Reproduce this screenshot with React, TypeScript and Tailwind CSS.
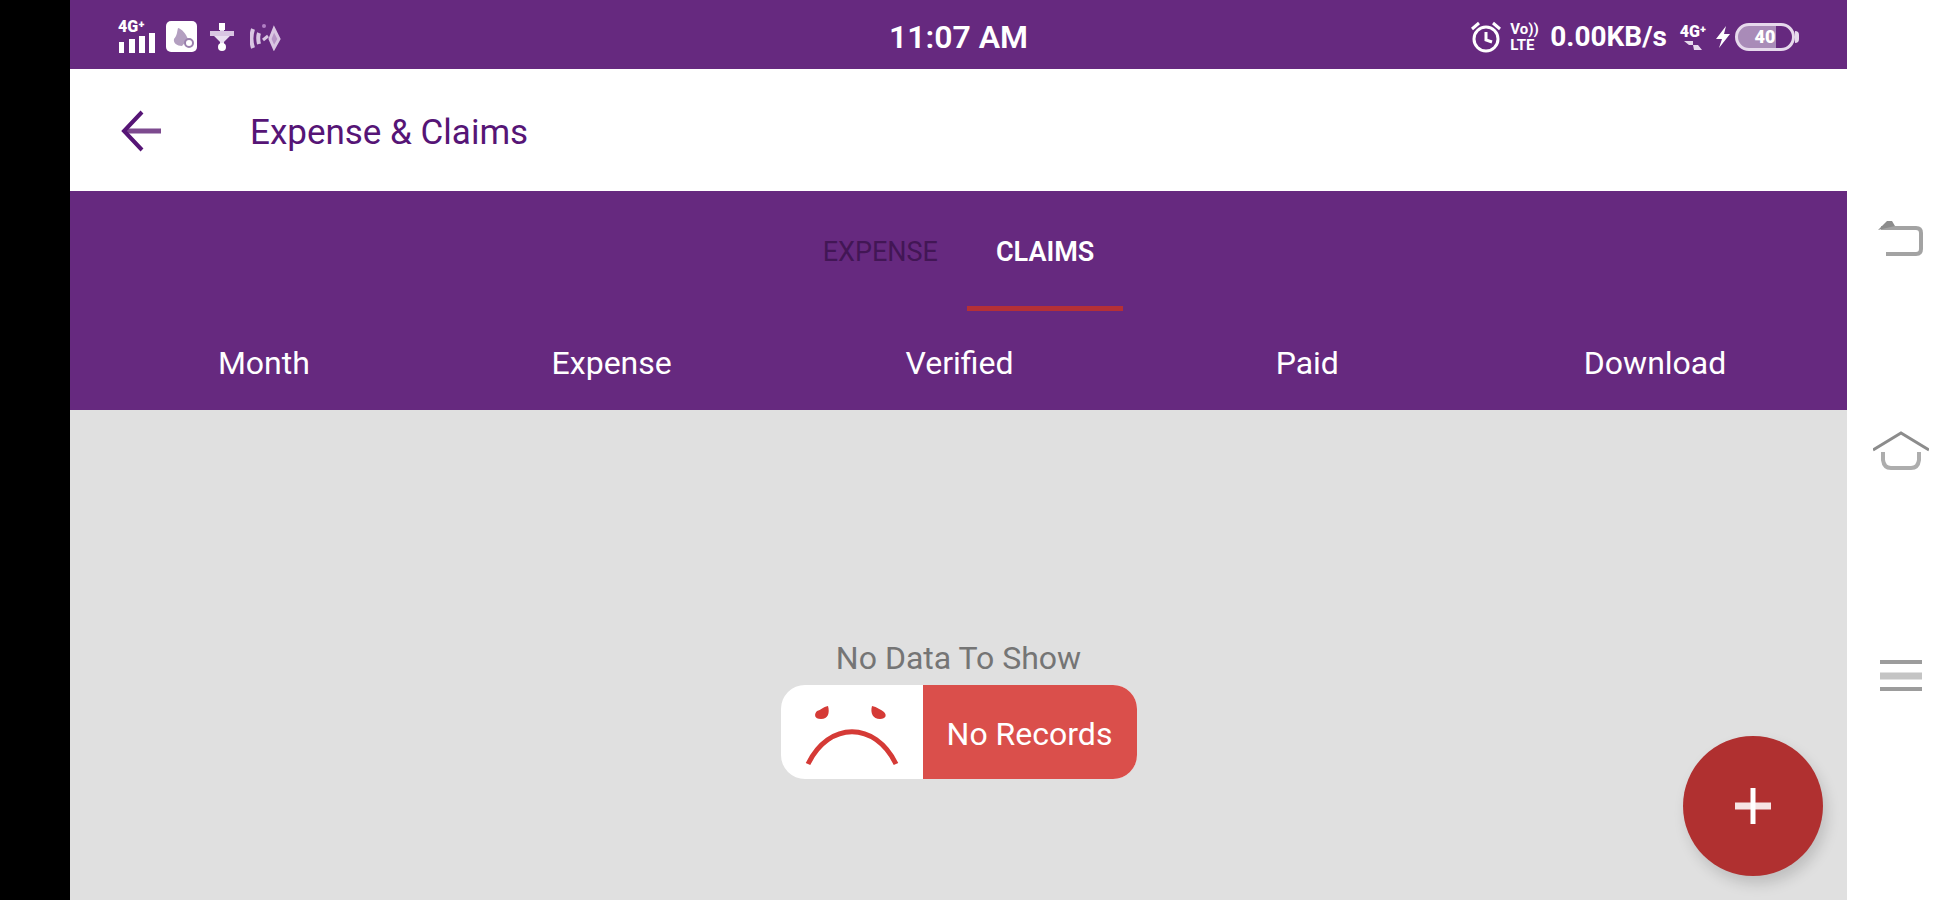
import { useState } from "react";

const TABS = ["EXPENSE", "CLAIMS"];
const COLUMNS = ["Month", "Expense", "Verified", "Paid", "Download"];

function SignalIcon() {
  return (
    <div className="flex w-10 flex-col">
      <span className="text-[16px] leading-3 font-black">4G⁺</span>
      <svg viewBox="0 0 40 20" className="h-5 w-10" fill="currentColor">
        <rect x="1" y="9" width="5" height="11" />
        <rect x="11" y="6" width="6" height="14" />
        <rect x="21" y="3" width="6" height="17" />
        <rect x="31" y="0" width="6" height="20" />
      </svg>
    </div>
  );
}

function AppBadgeIcon() {
  return (
    <svg viewBox="0 0 32 32" className="size-8">
      <rect x="0" y="0" width="31" height="31" rx="5" fill="#fff" />
      <path d="M12 7c4 1 8 6 10 11l-6 7c-5 0-9-3-8-7 3-3 3-7 4-11z" fill="#b39fc0" />
      <circle cx="23" cy="22" r="4" fill="#fff" stroke="#9a80ad" strokeWidth="2" />
    </svg>
  );
}

function UsbIcon() {
  return (
    <svg viewBox="0 0 24 28" className="h-7 w-6" fill="none" stroke="#eadff0" strokeWidth="4">
      <path d="M12 3v22M4 10l8 8M20 10l-8 8" />
      <path d="M9 0h6v7H9z" fill="#fff" stroke="none" />
      <path d="M0 8h24v5H0z" fill="#d9c6e2" stroke="none" />
      <circle cx="12" cy="24" r="4" fill="#fff" stroke="none" />
    </svg>
  );
}

function CastIcon() {
  return (
    <svg viewBox="0 0 32 28" className="h-7 w-8" fill="none" stroke="#d9c6e2" strokeWidth="4">
      <path d="M3 6c-2 6-2 13 0 19M9 10c-1 3-1 7 0 11" />
      <path d="M13 17l5-4" strokeWidth="3" />
      <path d="M24 6l5 10-5 9-4-9z" fill="#b795c6" strokeWidth="3" />
      <circle cx="14" cy="3" r="2" fill="#b27fc4" stroke="none" />
    </svg>
  );
}

function AlarmIcon() {
  return (
    <svg viewBox="0 0 32 32" className="size-8" fill="none" stroke="#fff" strokeWidth="3">
      <circle cx="16" cy="18" r="12" />
      <path d="M16 11v8l6 2M2 8l7-6M30 8l-7-6" />
    </svg>
  );
}

function BatteryIcon() {
  return (
    <div className="flex items-center">
      <svg viewBox="0 0 16 24" className="h-6 w-4" fill="#fff">
        <path d="M11 1L1 14h6l-3 9L15 9H9z" />
      </svg>
      <div className="ml-1 flex h-7 w-[60px] items-center justify-center rounded-full border-3 border-[#e6d9ec] bg-linear-to-r from-[#a98bb8] from-70% to-transparent to-70% text-[18px] leading-none font-black">
        40
      </div>
      <div className="h-3 w-1 rounded-r-sm bg-[#e6d9ec]" />
    </div>
  );
}

function StatusBar() {
  return (
    <div className="grid h-[69px] grid-cols-3 items-center bg-[#66297f] pt-1 pr-12 pl-12 text-white">
      <div className="flex items-center">
        <SignalIcon />
        <div className="ml-2">
          <AppBadgeIcon />
        </div>
        <div className="ml-3">
          <UsbIcon />
        </div>
        <div className="ml-4">
          <CastIcon />
        </div>
      </div>
      <div className="text-center text-[32px] leading-9 font-semibold">11:07 AM</div>
      <div className="flex items-center justify-end">
        <AlarmIcon />
        <div className="ml-2 flex w-8 flex-col text-[15px] leading-4 font-bold">
          <span>Vo))</span>
          <span>LTE</span>
        </div>
        <span className="ml-2 text-[28px] leading-8 font-bold">0.00KB/s</span>
        <div className="mr-2 ml-3 flex w-7 flex-col items-center">
          <span className="text-[16px] leading-4 font-black">4G⁺</span>
          <svg viewBox="0 0 18 10" className="h-[10px] w-[18px]" fill="#e6d9ec">
            <path d="M0 1h9v4H5zM9 5h5l4 5h-8z" />
          </svg>
        </div>
        <BatteryIcon />
      </div>
    </div>
  );
}

function SadFace() {
  return (
    <svg viewBox="0 0 142 94" className="h-[94px] w-[142px]">
      <path d="M47 21c2 7 0 13-7 13-7 0-7-5-4-8 4-1 6-4 11-5z" fill="#d53a36" />
      <path d="M91 21c-2 7 1 13 8 13 6 0 7-4 4-7-3-2-7-5-12-6z" fill="#d53a36" />
      <path d="M27 79C48 36 94 36 115 79" fill="none" stroke="#d53a36" strokeWidth="5" />
    </svg>
  );
}

function EmptyState() {
  return (
    <div className="flex flex-col items-center pt-[229px]">
      <p className="text-[32px] leading-[38px] text-[#757575]">No Data To Show</p>
      <div className="mt-2 flex h-[94px] overflow-hidden rounded-3xl bg-white">
        <SadFace />
        <div className="flex w-[214px] items-center justify-center bg-[#da4f4b] pt-1 text-[32px] text-white">
          No Records
        </div>
      </div>
    </div>
  );
}

function NavRail() {
  return (
    <nav className="flex w-[106px] shrink-0 flex-col items-center bg-white pt-[210px] pl-[2px] text-[#8c8c8c]">
      <button type="button" aria-label="Back">
        <svg viewBox="0 0 56 56" className="size-14" fill="none" stroke="currentColor" strokeWidth="4">
          <path d="M8 18h35q5 0 5 5v16q0 5-5 5H13" stroke="#a3a3a3" />
          <path d="M5 20l9-9h5l3 5z" fill="currentColor" stroke="none" />
        </svg>
      </button>
      <button type="button" aria-label="Home" className="mt-[157px]">
        <svg viewBox="0 0 56 56" className="size-14" fill="none" stroke="currentColor" strokeWidth="3">
          <path d="M0 27L28 10l28 17" />
          <path d="M10 29v8q1 8 8 8h20q7 0 8-8v-8" stroke="#adadad" strokeWidth="4" />
        </svg>
      </button>
      <button type="button" aria-label="Recent apps" className="mt-[169px]">
        <svg viewBox="0 0 56 56" className="size-14" fill="none" stroke="#9c9c9c" strokeWidth="4">
          <path d="M7 14h42M7 41h42" />
          <path d="M7 28h42" stroke="#c4c4c4" strokeWidth="7" />
        </svg>
      </button>
    </nav>
  );
}

export default function App() {
  const [activeTab, setActiveTab] = useState("CLAIMS");

  return (
    <div className="flex min-h-screen bg-black font-['Roboto',sans-serif]">
      <div className="w-[70px] shrink-0 bg-black" />

      <main className="relative flex flex-1 flex-col bg-[#e0e0e0]">
        <StatusBar />

        <header className="flex h-[122px] items-center bg-white pt-px pl-[50px] text-[#561576]">
          <button type="button" aria-label="Go back">
            <svg viewBox="0 0 44 44" className="size-11" fill="none" stroke="currentColor" strokeWidth="4">
              <path d="M5 22h36" strokeWidth="5" stroke="#7d4a8f" />
              <path d="M22 3L4 22l18 19" />
            </svg>
          </button>
          <h1 className="ml-[86px] pt-1 text-[35px] leading-10 font-normal">Expense &amp; Claims</h1>
        </header>

        <div className="bg-[#66297f]">
          <div role="tablist" className="flex h-[120px] justify-center">
            {TABS.map((tab) => (
              <button
                key={tab}
                type="button"
                role="tab"
                aria-selected={activeTab === tab}
                onClick={() => setActiveTab(tab)}
                className={
                  activeTab === tab
                    ? "border-b-5 border-[#b53036] px-[29px] pt-2 text-[27px] font-semibold text-white"
                    : "border-b-5 border-transparent px-[29px] pt-2 text-[27px] text-[#421655]"
                }
              >
                {tab}
              </button>
            ))}
          </div>

          <div className="pr-[18px] pl-5">
            <table className="w-full table-fixed">
              <thead>
                <tr className="h-[99px]">
                  {COLUMNS.map((column) => (
                    <th key={column} scope="col" className="pt-1 text-center text-[32px] font-normal text-white">
                      {column}
                    </th>
                  ))}
                </tr>
              </thead>
            </table>
          </div>
        </div>

        <EmptyState />

        <button
          type="button"
          aria-label="Add claim"
          className="absolute right-6 bottom-6 flex size-[140px] items-center justify-center rounded-full bg-[#b03030] shadow-[4px_8px_14px_rgba(0,0,0,0.15)]"
        >
          <svg viewBox="0 0 36 36" className="size-9" stroke="#fff" strokeWidth="5">
            <path d="M0 18h36" stroke="#f6e4e4" strokeWidth="7" />
            <path d="M18 0v36" />
          </svg>
        </button>
      </main>

      <NavRail />
    </div>
  );
}
